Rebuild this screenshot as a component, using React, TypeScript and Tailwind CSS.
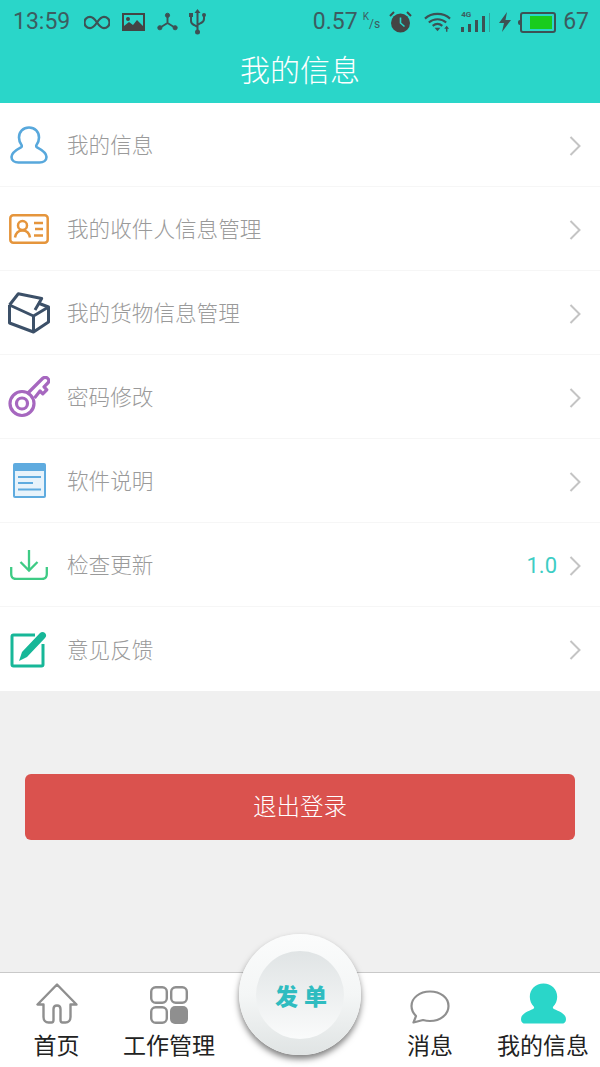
import type { ReactNode } from 'react';

const cjk = { fontFamily: 'Roboto, "Noto Sans CJK SC", sans-serif' };

const UserIcon = () => (
  <svg width="38" height="38" viewBox="0 0 38 38" fill="none" stroke="#58a8dc" strokeWidth="2.600">
    <path d="M19 1.500c-6 0-10 4.500-10 10 0 3 1 5.500 2.500 7.500.6.900.3 1.800-.6 2.400C6 24 1.500 27 1.500 31c0 3.500 3 5.500 7 5.500h21c4 0 7-2 7-5.500 0-4-4.500-7-9.400-9.600-.9-.6-1.200-1.500-.6-2.400 1.500-2 2.500-4.500 2.500-7.500 0-5.500-4-10-10-10z" />
  </svg>
);

const CardIcon = () => (
  <svg width="40" height="30" viewBox="0 0 40 30" fill="none" stroke="#e5953c" strokeWidth="2.500">
    <rect x="1.300" y="1.300" width="37.400" height="27.400" rx="3" />
    <circle cx="13.500" cy="11.500" r="4.500" />
    <path d="M6 23.500c.8-4.500 3.800-7 7.500-7s6.700 2.500 7.500 7" />
    <path d="M25 9h9M26 15h8M25 21.500h9" />
  </svg>
);

const BoxIcon = () => (
  <svg width="42" height="42" viewBox="0 0 42 42" fill="none" stroke="#3c5068" strokeWidth="3" strokeLinejoin="round">
    <path d="M1.500 13 10.300 1.800 33.700 6.500 27 18" />
    <path d="M1.500 13V31l24 9L40.500 30V15L30 11" />
    <path d="M1.500 13 25.500 24 40.500 15M25.500 24V40" />
  </svg>
);

const KeyIcon = () => (
  <svg width="42" height="42" viewBox="0 0 42 42" fill="none" stroke="#a667bf" strokeWidth="3.200" strokeLinejoin="round">
    <circle cx="14" cy="27.500" r="12" />
    <circle cx="14" cy="27.500" r="5.500" />
    <path d="M20 17 34.500 2.500c1.500-1.500 4-1.500 5.300 0 1.300 1.400 1.200 3.300 0 4.500l-3.800 3.800 2.800 3-4 4-2.800-2.800-5.500 7" />
  </svg>
);

const DocIcon = () => (
  <svg width="33" height="35" viewBox="0 0 33 35">
    <rect x="0" y="0" width="33" height="35" rx="2" fill="#5fabdf" />
    <rect x="2" y="8" width="29" height="25" fill="#e8f3fb" />
    <path d="M5 14h23M5 20h15M5 26.500h23" stroke="#5fabdf" strokeWidth="2" />
  </svg>
);

const DownloadIcon = () => (
  <svg width="38" height="30" viewBox="0 0 38 30" fill="none" stroke="#3ecb85" strokeWidth="2.300">
    <path d="M19 0v20M10.500 12 19 20.500 27.500 12" />
    <path d="M1.200 17v7c0 3 2 5 5 5h25.600c3 0 5-2 5-5v-7" />
  </svg>
);

const EditIcon = () => (
  <svg width="38" height="38" viewBox="0 0 38 38">
    <path d="M25 5H3.500A1.500 1.500 0 0 0 2 6.500v28A1.500 1.500 0 0 0 3.500 36h28a1.500 1.500 0 0 0 1.500-1.500V14" fill="none" stroke="#17b798" strokeWidth="3" />
    <path d="M9 31l3-9L30 3c1.500-1.500 3.500-1.500 5 0s1.500 3.500 0 5L17 27z" fill="#17b798" />
  </svg>
);

const Chevron = () => (
  <svg width="12" height="20" viewBox="0 0 12 20" fill="none" stroke="#c4c4c4" strokeWidth="2">
    <path d="M1.500 1l9 9-9 9" />
  </svg>
);

const menu: { icon: ReactNode; label: string; extra?: string }[] = [
  { icon: <UserIcon />, label: '我的信息' },
  { icon: <CardIcon />, label: '我的收件人信息管理' },
  { icon: <BoxIcon />, label: '我的货物信息管理' },
  { icon: <KeyIcon />, label: '密码修改' },
  { icon: <DocIcon />, label: '软件说明' },
  { icon: <DownloadIcon />, label: '检查更新', extra: '1.0' },
  { icon: <EditIcon />, label: '意见反馈' },
];

function StatusBar() {
  return (
    <div className="flex h-[44px] items-center justify-between pl-[13px] pr-[11px] text-[23px] text-[#3c5c60]">
      <div className="flex items-center">
        <span>13:59</span>
        <svg className="ml-[14px]" width="26" height="15" viewBox="0 0 28 16" fill="none" stroke="#3d5154" strokeWidth="2.400">
          <path d="M14 8C11 3.500 9 2 6.500 2a6 6 0 0 0 0 12C9 14 11 12.500 14 8s5-6 7.500-6a6 6 0 0 1 0 12C19 14 17 12.500 14 8z" />
        </svg>
        <svg className="ml-[12px]" width="23" height="18" viewBox="0 0 23 18" fill="#444">
          <path d="M0 0h23v18H0zM2 2v11l5-4 4 3 4-5 6 6V2z" fillRule="evenodd" />
          <circle cx="6" cy="6" r="2" />
        </svg>
        <svg className="ml-[12px]" width="21" height="20" viewBox="0 0 22 20" fill="#3d5154" stroke="#3d5154">
          <circle cx="11" cy="3" r="2.200" />
          <circle cx="3" cy="16" r="2.200" />
          <circle cx="19" cy="16" r="2.200" />
          <path d="M11 3v8L3 16M11 11l8 5" fill="none" strokeWidth="2" />
        </svg>
        <svg className="ml-[11px]" width="17" height="26" viewBox="0 0 17 26" fill="none" stroke="#3d5154" strokeWidth="2">
          <path d="M8.500 3v20M2 7v5c0 2 1 3 3 4l3.500 2M15 7v3c0 2-1 3-3 4l-3.500 2" />
          <path d="M8.500 0l3 4h-6z" fill="#3d5154" stroke="none" />
          <circle cx="8.500" cy="23" r="2.500" fill="#3d5154" stroke="none" />
          <rect x="0" y="4" width="4" height="4" fill="#3d5154" stroke="none" />
          <circle cx="15" cy="6" r="2" fill="#3d5154" stroke="none" />
        </svg>
      </div>
      <div className="flex items-center">
        <span>0.57</span>
        <span className="ml-[5px] flex text-[10px] leading-none">
          <span className="-mt-[3px]">K</span>
          <span className="mt-[3px] text-[12px]">/s</span>
        </span>
        <svg className="ml-[9px]" width="23" height="22" viewBox="0 0 23 22">
          <circle cx="11.500" cy="12" r="9.500" fill="#444" />
          <path d="M11.500 6.500V12l4 3.500" fill="none" stroke="#2ad6c9" strokeWidth="1.600" />
          <path d="M1 5l4-4M22 5l-4-4" stroke="#444" strokeWidth="2" />
        </svg>
        <svg className="ml-[12px]" width="27" height="20" viewBox="0 0 28 20" fill="none" stroke="#3d5154" strokeWidth="2.200">
          <path d="M1 6.500c7-6.500 19-6.500 26 0M5 10.500c5-4.500 13-4.500 18 0M9 14c3-2.500 7-2.500 10 0" />
          <path d="M11 16h6l-3 3.500z" fill="#3d5154" stroke="none" />
          <path d="M23.500 14l2.500 3h-5zM22.800 17h1.500v3h-1.500z" fill="#3d5154" stroke="none" />
        </svg>
        <div className="relative ml-[10px] flex h-[20px] w-[29px] items-end gap-[4px]">
          <span className="absolute -top-[1px] left-0 text-[8px] font-bold leading-none">4G</span>
          <i className="h-[5px] w-[3px] bg-[#3d5154]" />
          <i className="h-[8px] w-[3px] bg-[#3d5154]" />
          <i className="h-[12px] w-[3px] bg-[#3d5154]" />
          <i className="h-[16px] w-[3px] bg-[#3d5154]" />
          <i className="h-[19px] w-[1px] bg-[#3d5154]/40" />
        </div>
        <svg className="ml-[9px]" width="12" height="20" viewBox="0 0 12 20" fill="#3d5154">
          <path d="M8 0 0 11h5l-2 9 9-12H6.500z" />
        </svg>
        <div className="ml-[7px] h-[5px] w-[2px] rounded-l-sm bg-[#3d5154]" />
        <div className="flex h-[21px] w-[36px] justify-end rounded-[3px] border-2 border-[#3d5154] p-[2px]">
          <div className="w-[22px] bg-[#19cc1d]" />
        </div>
        <span className="ml-[7px]">67</span>
      </div>
    </div>
  );
}

function MenuRow({ icon, label, extra }: { icon: ReactNode; label: string; extra?: string }) {
  return (
    <div className="flex h-[84px] items-center border-b border-[#f6f6f6] bg-white pr-[19px] pt-[2px] last:border-b-0">
      <div className="-mt-[2px] flex w-[58px] shrink-0 justify-center">{icon}</div>
      <span className="ml-[9px] mt-[2px] flex-1 text-[21.600px] font-light text-[#9a9a9a]" style={cjk}>
        {label}
      </span>
      {extra && <span className="mr-[12px] text-[22px] text-[#3dcdc4]">{extra}</span>}
      <Chevron />
    </div>
  );
}

function TabItem({ icon, label, className }: { icon: ReactNode; label: string; className: string }) {
  return (
    <div className={`flex flex-col items-center ${className}`}>
      <div className="flex h-[51px] items-end">{icon}</div>
      <span className="mt-[7px] whitespace-nowrap text-[23px] leading-[32px] text-[#222]">{label}</span>
    </div>
  );
}

export default function App() {
  return (
    <div className="relative flex h-[1067px] w-[600px] flex-col overflow-hidden bg-[#f0f0f0]" style={cjk}>
      <header className="h-[103px] shrink-0 bg-[#2ad6c9]">
        <StatusBar />
        <h1 className="mt-[4px] text-center text-[30px] font-light leading-[46px] text-white">我的信息</h1>
      </header>

      <div className="shrink-0">
        {menu.map((m) => (
          <MenuRow key={m.label} {...m} />
        ))}
      </div>

      <div className="flex-1 px-[25px] pt-[83px]">
        <button className="h-[66px] w-full rounded-[6px] bg-[#da524e] pt-[2px] text-[23.500px] font-light text-white">退出登录</button>
      </div>

      <nav className="relative h-[95px] shrink-0 border-t border-[#c9c9c9] bg-white">
        <div className="flex">
          <TabItem
            className="w-[113px]"
            label="首页"
            icon={
              <svg width="42" height="41" viewBox="0 0 42 41" fill="none" stroke="#8f8f8f" strokeWidth="2.400" strokeLinejoin="round">
                <path d="M21 1.500 1.500 21.500h6V34c0 3 2 5.500 5 5.500h3c1.500 0 2-1 2-2.500V26c0-2 1.500-3.500 3.500-3.500s3.500 1.500 3.500 3.500v11c0 1.500.5 2.500 2 2.500h3c3 0 5-2.500 5-5.500V21.500h6z" />
              </svg>
            }
          />
          <TabItem
            className="w-[112px]"
            label="工作管理"
            icon={
              <svg width="38" height="38" viewBox="0 0 38 38" fill="none" stroke="#8f8f8f" strokeWidth="2.400">
                <rect x="1.200" y="1.200" width="15.600" height="15.600" rx="4.500" />
                <rect x="21.200" y="1.200" width="15.600" height="15.600" rx="4.500" />
                <rect x="1.200" y="21.200" width="15.600" height="15.600" rx="4.500" />
                <rect x="20" y="20" width="18" height="18" rx="5" fill="#8f8f8f" stroke="none" />
              </svg>
            }
          />
          <TabItem
            className="ml-[149px] w-[112px]"
            label="消息"
            icon={
              <svg width="40" height="34" viewBox="0 0 40 34" fill="none" stroke="#8f8f8f" strokeWidth="2.200" strokeLinejoin="round">
                <path d="M20 1.500C9.500 1.500 1.500 8 1.500 16c0 4 2 7.500 4.500 10L3.500 32.500 13 30c2 .6 4.500 1 7 1 10.500 0 18.500-6.500 18.500-15S30.500 1.500 20 1.500z" />
              </svg>
            }
          />
          <TabItem
            className="w-[114px]"
            label="我的信息"
            icon={
              <svg width="45" height="41" viewBox="0 0 46 41" fill="#2ad6c9">
                <path d="M23 0C15 0 9 6 9 13.500c0 4 1.500 7.500 4 10 .8 1 .5 2-.6 2.700C7 28.500 0 31 0 36.500 0 39.500 1.800 41 4.500 41h37c2.700 0 4.500-1.500 4.500-4.500 0-5.500-7-8-12.400-10.300-1.100-.7-1.400-1.700-.6-2.700 2.500-2.500 4-6 4-10C37 6 31 0 23 0z" />
              </svg>
            }
          />
        </div>
      </nav>

      <div className="absolute left-[239px] top-[934px] flex h-[121px] w-[122px] items-center justify-center rounded-full bg-gradient-to-b from-[#fbfcfc] via-[#f4f6f6] to-[#e0e4e4] shadow-[0_4px_6px_rgba(0,0,0,0.5)]">
        <div className="flex h-[88px] w-[88px] items-center justify-center gap-[6px] rounded-full bg-gradient-to-b from-[#e0e4e5] to-[#fafbfb] pl-[2px] pt-[7px] text-[23px] font-black text-[#2fbcc0]">
          <span>发</span>
          <span>单</span>
        </div>
      </div>
    </div>
  );
}
